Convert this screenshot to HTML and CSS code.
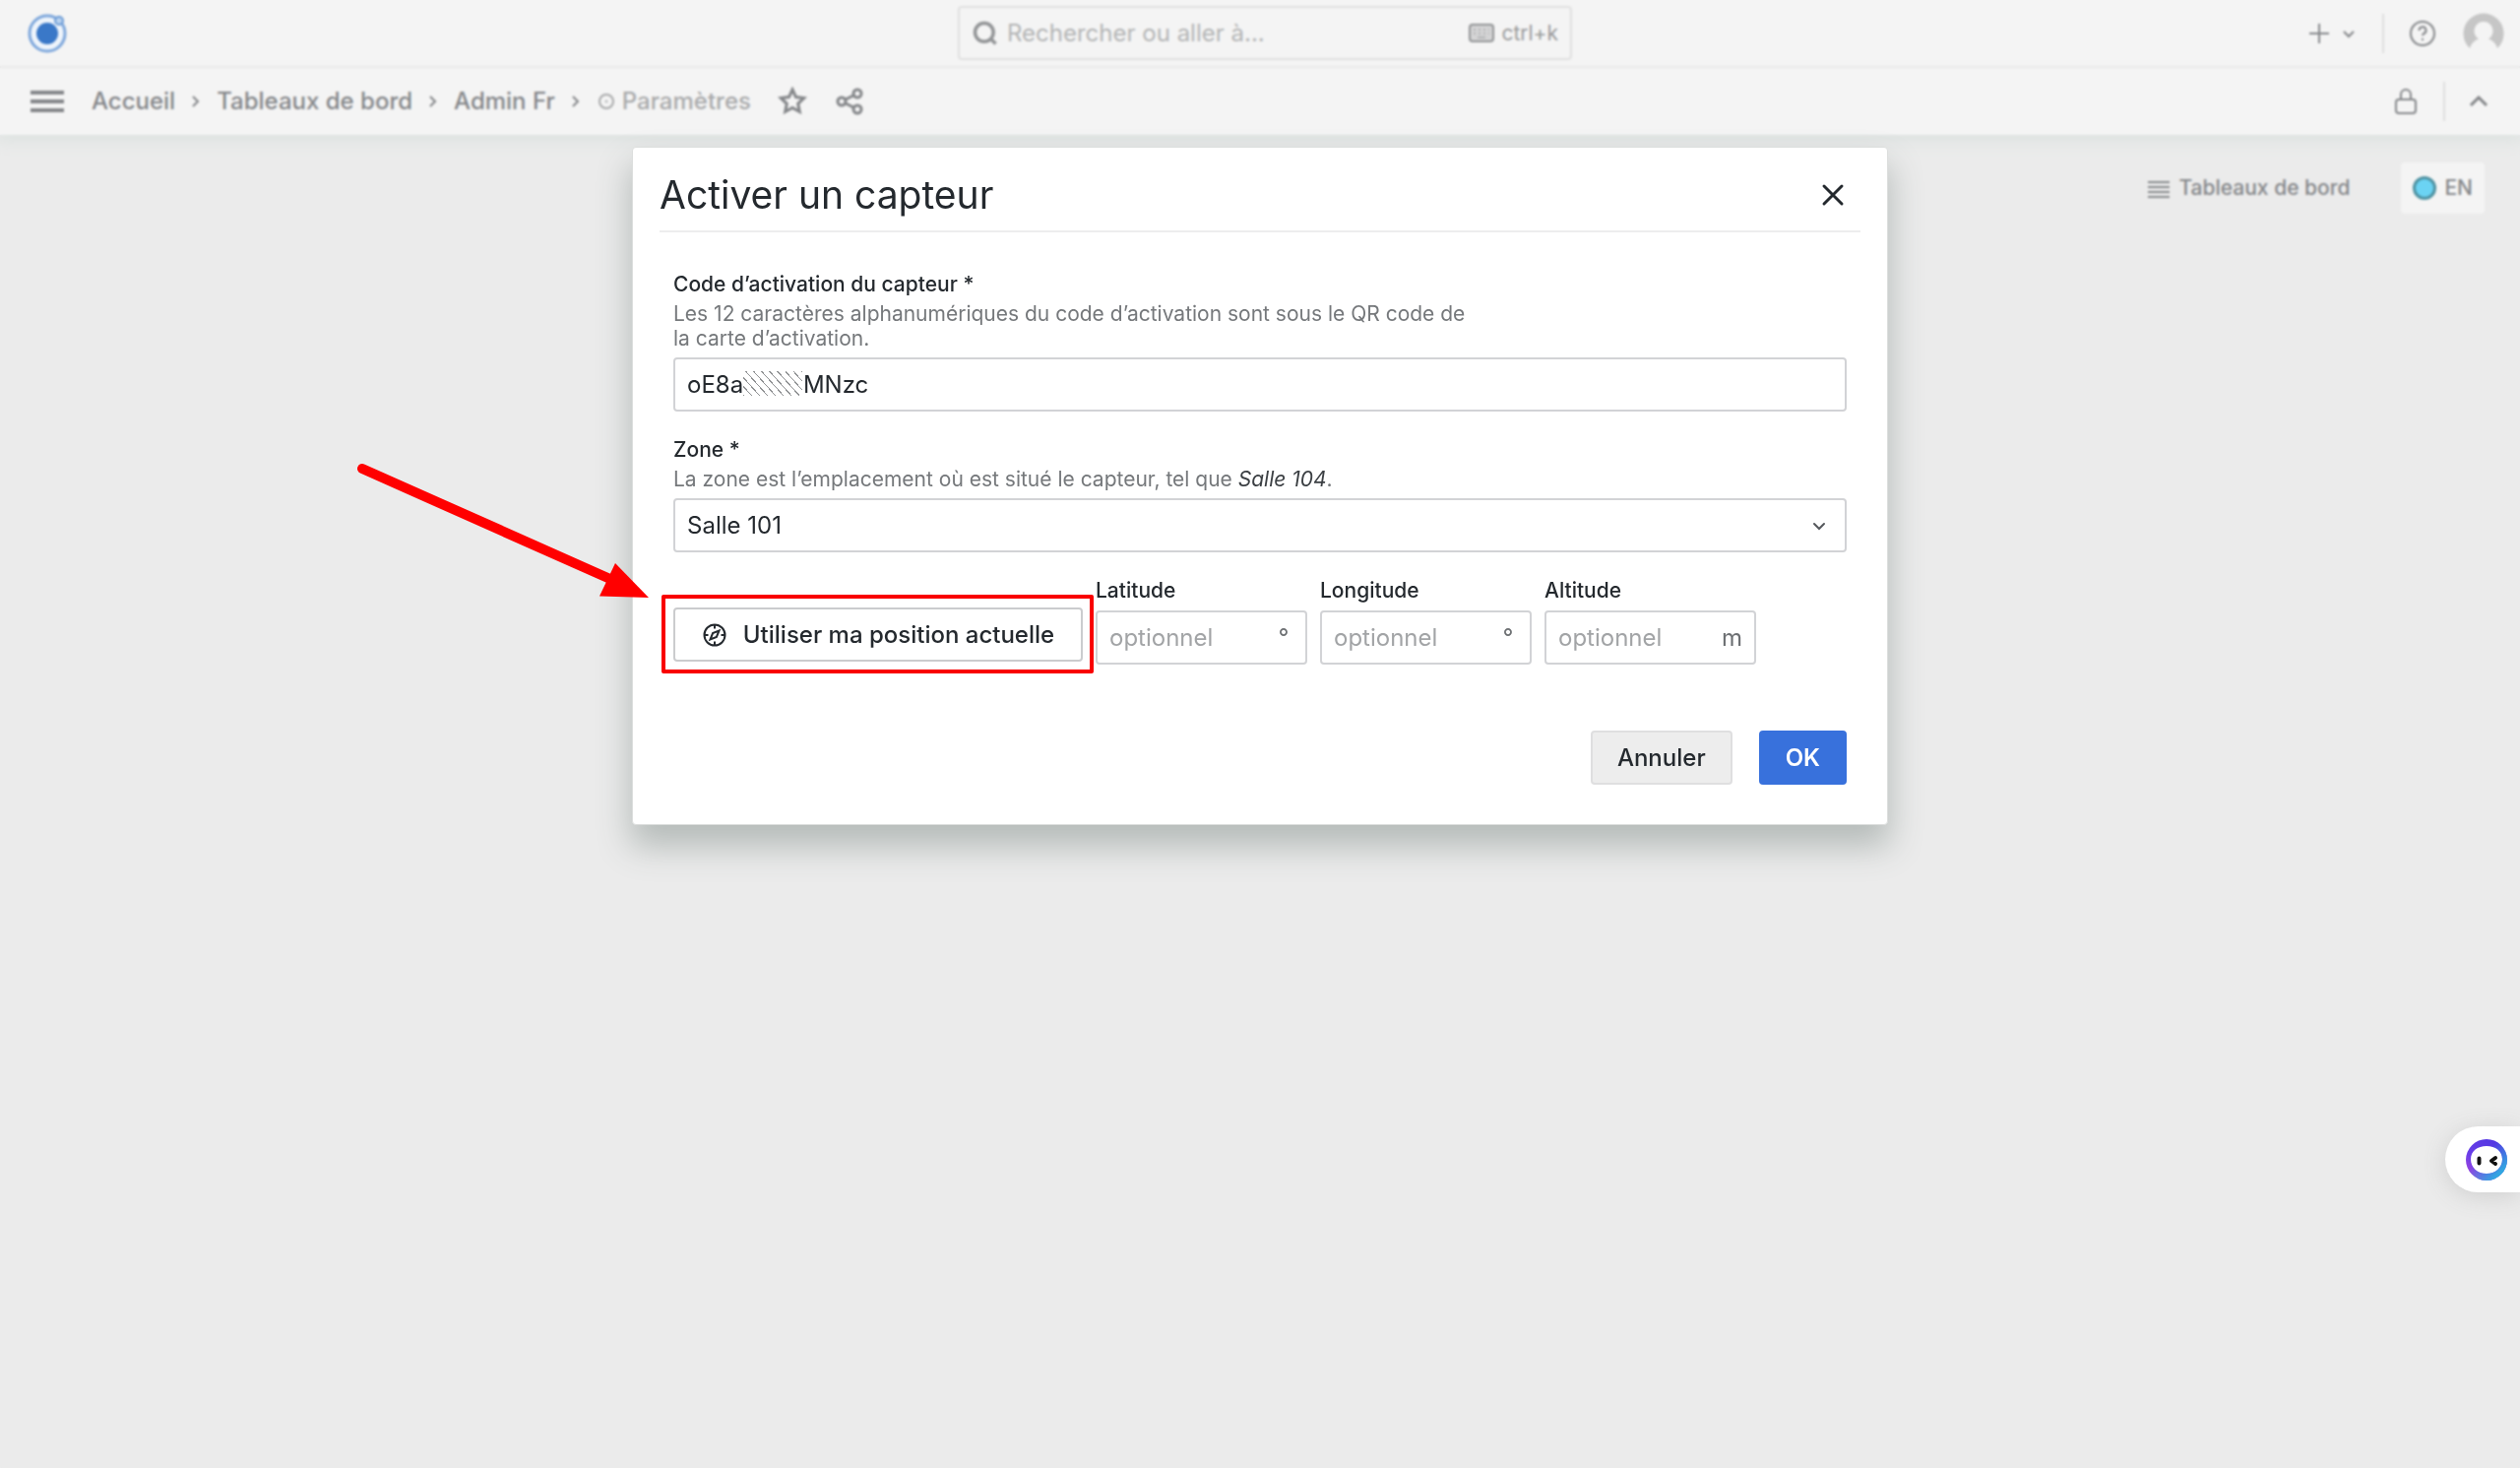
FILE: index.html
```html
<!DOCTYPE html>
<html lang="fr">
<head>
<meta charset="utf-8">
<meta name="viewport" content="width=device-width, initial-scale=1">
<title>Paramètres - Admin Fr</title>
<link rel="stylesheet" href="styles.css">
</head>
<body>
<div class="app">
  <header class="chrome">
    <div class="topbar">
      <a class="logo" href="#" aria-label="Accueil">
        <svg width="44" height="44" viewBox="0 0 44 44"><circle cx="22" cy="22" r="18" fill="#eef4fb" stroke="#7fa8dc" stroke-width="3"/><circle cx="22" cy="22" r="11" fill="#3a78c8"/><circle cx="34" cy="9" r="4" fill="#b9d2ef" stroke="#6b9bd6" stroke-width="2"/></svg>
      </a>
      <div class="search">
        <svg class="icon bold" width="28" height="28" viewBox="0 0 24 24"><circle cx="11" cy="11" r="8"/><path d="M17 17l4 4"/></svg>
        <input class="search-input" type="search" aria-label="Rechercher" placeholder="Rechercher ou aller à...">
        <svg class="icon" width="28" height="24" viewBox="0 0 28 24"><rect x="2" y="3" width="24" height="17" rx="3" fill="#d4d4d5"/><path d="M6 8h2m3 0h2m3 0h2m3 0h1M6 12h2m3 0h2m3 0h2m3 0h1M10 16h8" stroke-width="1"/></svg>
        <span class="shortcut">ctrl+k</span>
      </div>
      <div class="actions">
        <button class="icon-button new" aria-label="Nouveau">
          <svg class="icon" width="24" height="24" viewBox="0 0 24 24"><path d="M12 2v20M2 12h20"/></svg>
          <svg class="icon" width="16" height="16" viewBox="0 0 16 16"><path d="M3 6l5 5 5-5"/></svg>
        </button>
        <span class="divider"></span>
        <button class="icon-button" aria-label="Aide">
          <svg class="icon" width="30" height="30" viewBox="0 0 30 30"><circle cx="15" cy="15" r="12"/><path d="M11.500 12a3.500 3.500 0 1 1 5 3q-1.500.7-1.500 2.200M15 20v2"/></svg>
        </button>
        <button class="icon-button" aria-label="Profil">
          <svg width="42" height="42" viewBox="0 0 42 42"><path d="M7 36A20.500 20.500 0 1 1 35 36Q33 29 26 26.500A9.500 9.500 0 1 0 16 26.500Q9 29 7 36Z" fill="#c6c6c6"/></svg>
        </button>
      </div>
    </div>
    <div class="navbar">
      <button class="icon-button" aria-label="Menu">
        <svg class="icon menu-icon" width="34" height="28" viewBox="0 0 34 28"><path d="M0 5h34M0 14h34M0 23h34"/></svg>
      </button>
      <nav class="crumbs" aria-label="Fil d’Ariane">
        <a href="#">Accueil</a>
        <svg class="icon" width="10" height="16" viewBox="0 0 10 16"><path d="M2 3l5 5-5 5"/></svg>
        <a href="#">Tableaux de bord</a>
        <svg class="icon" width="10" height="16" viewBox="0 0 10 16"><path d="M2 3l5 5-5 5"/></svg>
        <a href="#">Admin Fr</a>
        <svg class="icon" width="10" height="16" viewBox="0 0 10 16"><path d="M2 3l5 5-5 5"/></svg>
        <span class="current">
          <svg class="icon" width="20" height="20" viewBox="0 0 20 20"><circle cx="10" cy="10" r="7"/><circle cx="10" cy="10" r="1" stroke-width="1"/></svg>
          Paramètres
        </span>
      </nav>
      <button class="icon-button" aria-label="Favori">
        <svg class="icon bold" width="30" height="30" viewBox="0 0 30 30"><path d="M15 3l3.500 7.600 8.200 1-6 5.700 1.600 8.200-7.300-4-7.300 4 1.600-8.200-6-5.700 8.200-1z"/></svg>
      </button>
      <button class="icon-button" aria-label="Partager">
        <svg class="icon bold" width="30" height="30" viewBox="0 0 30 30"><circle cx="7" cy="15" r="4"/><circle cx="23" cy="7" r="4"/><circle cx="23" cy="23" r="4"/><path d="M11 13l8-4M11 17l8 4"/></svg>
      </button>
      <div class="nav-end">
        <button class="icon-button" aria-label="Verrouiller">
          <svg class="icon" width="28" height="30" viewBox="0 0 28 30"><rect x="4" y="13" width="20" height="14" rx="3"/><path d="M9 13V8a5 5 0 0 1 10 0v5"/></svg>
        </button>
        <span class="divider"></span>
        <button class="icon-button caret" aria-label="Réduire">
          <svg class="icon bold" width="20" height="20" viewBox="0 0 20 20"><path d="M2 14l8-8 8 8"/></svg>
        </button>
      </div>
    </div>
  </header>
  <div class="controls">
    <a class="boards" href="#">
      <svg class="icon" width="24" height="20" viewBox="0 0 24 20"><path d="M1 4h22M1 9h22M1 14h22M1 19h22"/></svg>
      Tableaux de bord
    </a>
    <a class="lang" href="#"><span class="dot"></span>EN</a>
  </div>
</div>

<div class="backdrop">
  <section class="modal" role="dialog" aria-modal="true" aria-labelledby="modal-title">
    <div class="modal-header">
      <h1 class="modal-title" id="modal-title">Activer un capteur</h1>
      <button class="close" aria-label="Fermer">
        <svg width="24" height="24" viewBox="0 0 24 24"><path d="M3 3l18 18M21 3L3 21"/></svg>
      </button>
    </div>
    <form class="form">
      <div class="field">
        <label class="label" for="code">Code d’activation du capteur *</label>
        <p class="hint">Les 12 caractères alphanumériques du code d’activation sont sous le QR code de la carte d’activation.</p>
        <div class="control">
          <input class="input" id="code" type="text" value="oE8a         MNzc">
          <span class="mask"></span>
        </div>
      </div>
      <div class="field">
        <label class="label" for="zone">Zone *</label>
        <p class="hint">La zone est l’emplacement où est situé le capteur, tel que <em>Salle 104</em>.</p>
        <div class="control">
          <select class="input" id="zone"><option>Salle 101</option></select>
          <svg class="chevron" width="16" height="16" viewBox="0 0 16 16"><path d="M3 6l5 5 5-5"/></svg>
        </div>
      </div>
      <div class="location">
        <div class="locate-wrap">
          <button class="button locate" type="button">
            <svg width="26" height="26" viewBox="0 0 26 26"><circle cx="13" cy="13" r="10.500"/><path d="M13 2.500v4M13 19.500v4M2.500 13h4M19.500 13h4M17.500 8.500l-2.600 6.400-6.400 2.600 2.600-6.400z"/></svg>
            Utiliser ma position actuelle
          </button>
          <span class="highlight"></span>
          <svg class="arrow" width="300" height="146" viewBox="0 0 300 146"><path class="shaft" d="M6 6L260 119"/><path class="head" d="M263 102L297 137 247 135.500z"/></svg>
        </div>
        <div class="coord">
          <label class="label" for="lat">Latitude</label>
          <div class="control"><input class="input" id="lat" type="text" placeholder="optionnel"><span class="unit">°</span></div>
        </div>
        <div class="coord">
          <label class="label" for="lon">Longitude</label>
          <div class="control"><input class="input" id="lon" type="text" placeholder="optionnel"><span class="unit">°</span></div>
        </div>
        <div class="coord">
          <label class="label" for="alt">Altitude</label>
          <div class="control"><input class="input" id="alt" type="text" placeholder="optionnel"><span class="unit">m</span></div>
        </div>
      </div>
      <div class="footer">
        <button class="button cancel" type="button">Annuler</button>
        <button class="button ok" type="submit">OK</button>
      </div>
    </form>
  </section>
</div>

<button class="assistant" aria-label="Assistant">
  <svg width="42" height="42" viewBox="0 0 42 42">
    <defs><linearGradient id="ring" x1="0" y1="1" x2="1" y2="0"><stop offset="0" stop-color="#b848d8"/><stop offset=".35" stop-color="#6a3ee8"/><stop offset="1" stop-color="#4a35e0"/></linearGradient>
    <linearGradient id="glow" x1="0.400" y1="0.400" x2="1" y2="1"><stop offset="0" stop-color="#2bb5e0" stop-opacity="0"/><stop offset=".8" stop-color="#2bb5e0"/></linearGradient></defs>
    <path fill="url(#ring)" fill-rule="evenodd" d="M21 0a21 21 0 1 0 0 42 21 21 0 0 0 0-42zm0 7c9 0 16 5 16 13.500S30 35 21 35 5 29 5 20.500 12 7 21 7z"/>
    <path fill="url(#glow)" fill-rule="evenodd" d="M21 0a21 21 0 1 0 0 42 21 21 0 0 0 0-42zm0 7c9 0 16 5 16 13.500S30 35 21 35 5 29 5 20.500 12 7 21 7z"/>
    <path d="M13.500 19.500v5M30 19l-4 3 4 3" fill="none" stroke="#111" stroke-width="4" stroke-linecap="round" stroke-linejoin="round"/>
  </svg>
</button>
</body>
</html>
```
FILE: styles.css
```css
* { box-sizing: border-box; }

body {
  margin: 0;
  min-height: 100vh;
  background: #ebebeb;
  color: #24292e;
  font-family: Inter, "Liberation Sans", sans-serif;
  font-size: 24px;
  line-height: 36px;
  overflow-x: hidden;
}

button, input, select { font: inherit; color: inherit; margin: 0; }
button { cursor: pointer; }
a { color: inherit; text-decoration: none; }
svg { display: block; flex: none; }

.icon { fill: none; stroke: currentColor; stroke-width: 2; }
.bold { stroke-width: 3; }

/* Application chrome behind the dialog */
.app { min-height: 100vh; color: #85878a; }

.chrome {
  background: #f4f4f4;
  box-shadow: 0 2px 16px 4px #dce2e0;
}

.topbar {
  display: grid;
  grid-template-columns: 1fr 624px 1fr;
  align-items: center;
  height: 69px;
  padding: 0 16px 0 26px;
  border-bottom: 2px solid #e9e9e9;
}

.logo { justify-self: start; }

.search {
  display: flex;
  align-items: center;
  height: 55px;
  padding: 0 12px;
  border: 2px solid #e0e0e0;
  border-radius: 4px;
  color: #939597;
}

.search-input {
  flex: 1;
  min-width: 0;
  padding: 0 8px;
  border: 0;
  background: none;
  outline: 0;
}
.search-input::placeholder { color: #b3b4b5; opacity: 1; }
.search .icon + .shortcut { margin-left: 6px; }
.shortcut { font-size: 21px; color: #98999a; }

.actions, .nav-end { display: flex; align-items: center; }
.actions { justify-self: end; gap: 24px; }
.icon-button {
  display: flex;
  align-items: center;
  padding: 0;
  border: 0;
  background: none;
}
.new { gap: 10px; }
.actions .new { margin-right: 2px; }
.divider { width: 2px; height: 40px; background: #dedede; }
.actions > .icon-button:last-child { margin-left: 2px; }

.navbar {
  display: flex;
  align-items: center;
  height: 68px;
  padding: 0 32px 0 31px;
}
.navbar > .icon-button { margin-right: 28px; }
.menu-icon { stroke-width: 4; }
.crumbs {
  display: flex;
  align-items: center;
  gap: 16px;
  margin-right: 27px;
  font-weight: 500;
}
.current {
  display: flex;
  align-items: center;
  gap: 6px;
  color: #a9aaab;
}
.nav-end { margin-left: auto; gap: 24px; }

.controls {
  display: flex;
  justify-content: flex-end;
  align-items: center;
  gap: 52px;
  padding: 28px 36px;
  font-size: 21px;
  font-weight: 500;
}
.boards, .lang { display: flex; align-items: center; }
.boards { gap: 8px; }
.lang {
  gap: 8px;
  height: 52px;
  padding: 0 12px;
  border-radius: 4px;
  background: #f4f4f4;
}
.dot {
  width: 24px;
  height: 24px;
  border: 3px solid #4f93a3;
  border-radius: 50%;
  background: #6bd3f3;
}

/* Dialog */
.backdrop {
  position: fixed;
  inset: 0;
  padding: 149px 16px 16px;
  backdrop-filter: blur(1px);
}

.modal {
  max-width: 1276px;
  margin: 0 auto;
  padding: 0 27px;
  border: 1px solid #dcdedd;
  border-radius: 4px;
  background: #fff;
  box-shadow: 0 20px 34px 2px #b5bbb9;
}

.modal-header {
  display: flex;
  align-items: center;
  justify-content: space-between;
  height: 86px;
  padding: 12px 16px 0 0;
  border-bottom: 2px solid #ededee;
}
.modal-title {
  margin: 0;
  font-size: 39px;
  font-weight: 400;
  line-height: 44px;
}
.close { padding: 0; border: 0; background: none; }
.close svg { fill: none; stroke: #24292e; stroke-width: 3; stroke-linecap: round; }

.form { padding: 41px 14px 40px; }
.field { margin-bottom: 27px; }
.label {
  display: block;
  font-size: 21px;
  font-weight: 500;
  line-height: 24px;
}
.hint {
  max-width: 816px;
  margin: 5px 0 7px;
  font-size: 21px;
  line-height: 25px;
  color: #75787b;
}
.hint em { color: #3b3f43; }

.control { position: relative; }
.input {
  display: block;
  width: 100%;
  height: 55px;
  padding: 0 12px;
  border: 2px solid #d2d3d6;
  border-radius: 4px;
  background: #fff;
  outline: 0;
  appearance: none;
}
.input::placeholder { color: #a2a4a6; opacity: 1; }
.mask {
  position: absolute;
  left: 71px;
  top: 14px;
  width: 60px;
  height: 25px;
  background: repeating-linear-gradient(48deg, #909294 0 1px, #fff 1px 6px);
}
.chevron {
  position: absolute;
  right: 20px;
  top: 20px;
  fill: none;
  stroke: #55585c;
  stroke-width: 2;
  stroke-linecap: round;
}
.unit {
  position: absolute;
  right: 14px;
  top: 10px;
  min-width: 20px;
  text-align: center;
  color: #6c6f72;
}

.location { display: flex; align-items: flex-end; gap: 13px; }
.locate-wrap { position: relative; margin-bottom: 3px; }
.button {
  display: flex;
  align-items: center;
  justify-content: center;
  height: 55px;
  padding: 0 25px;
  border: 2px solid transparent;
  border-radius: 4px;
  font-weight: 500;
}
.locate { gap: 16px; width: 416px; border-color: #cbccce; background: #fff; white-space: nowrap; }
.locate svg { fill: none; stroke: #24292e; stroke-width: 2; }
.highlight {
  position: absolute;
  inset: -13px -11px -12px -12px;
  border: 4px solid #f90000;
  border-radius: 2px;
  pointer-events: none;
}
.arrow { position: absolute; right: 438px; bottom: 56px; }
.shaft { stroke: #f00; stroke-width: 10; stroke-linecap: round; }
.head { fill: #f00; }
.coord { width: 215px; }
.coord .label { margin-bottom: 8px; }

.footer { display: flex; justify-content: flex-end; gap: 27px; margin-top: 67px; }
.cancel { border-color: #dfdfe0; background: #ededed; }
.ok { background: #3871dc; color: #fff; font-weight: 600; }

/* Docked assistant launcher */
.assistant {
  position: fixed;
  right: 0;
  top: 1144px;
  display: flex;
  align-items: center;
  width: 76px;
  height: 67px;
  padding: 0 0 0 21px;
  border: 0;
  border-radius: 34px 0 0 34px;
  background: #fff;
  box-shadow: 0 4px 24px #cfcfcf;
}
```
